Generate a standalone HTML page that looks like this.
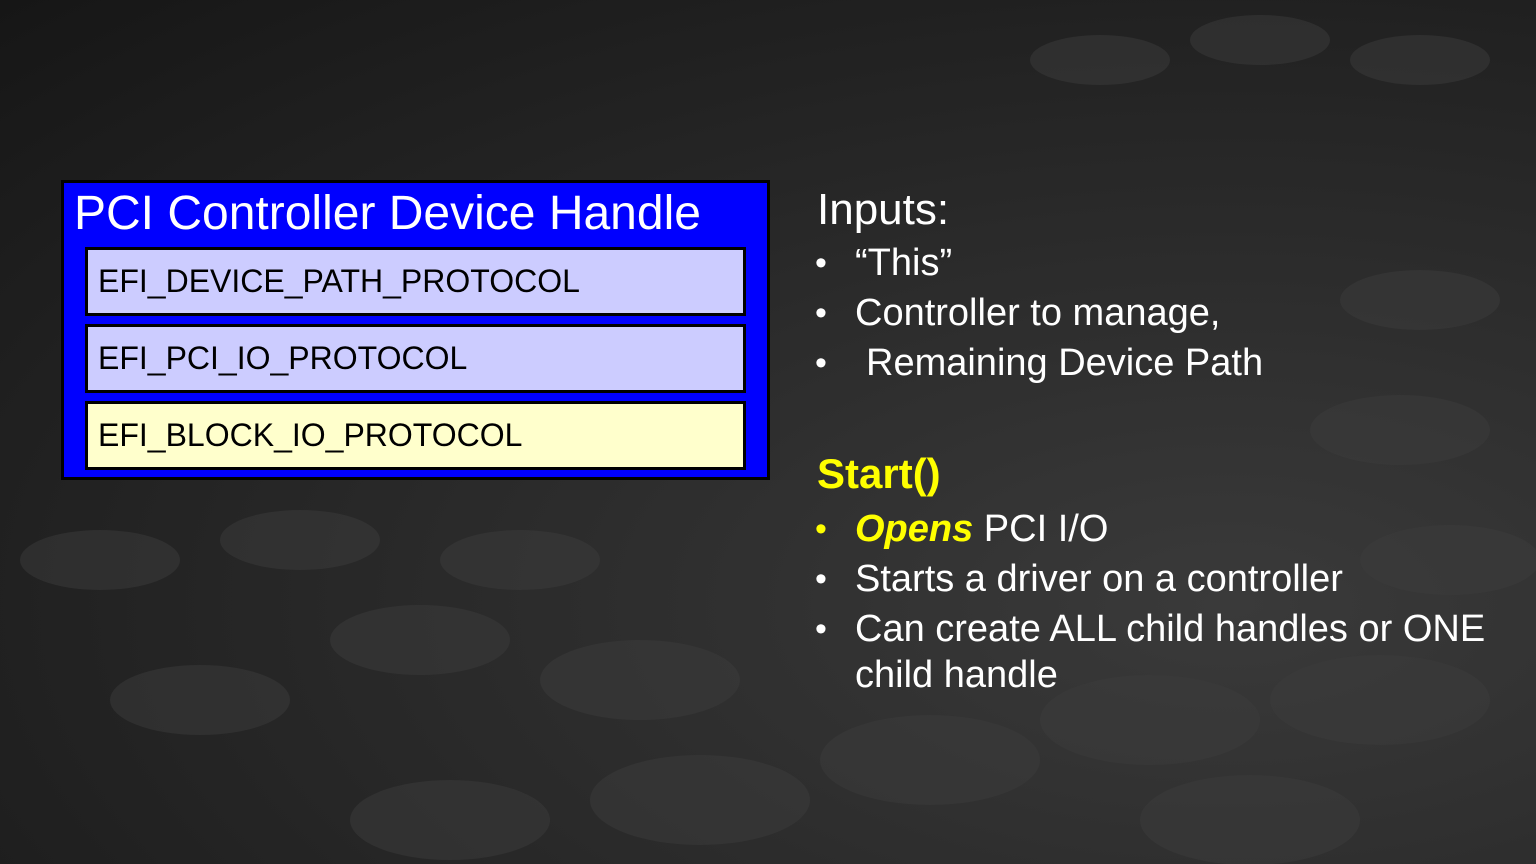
<!DOCTYPE html>
<html><head><meta charset="utf-8"><style>
body{margin:0;width:1536px;height:864px;overflow:hidden;font-family:"Liberation Sans",Arial,sans-serif;
background:radial-gradient(ellipse at 80% 70%,#3a3a3a 0%,#2a2a2a 45%,#161616 100%);position:relative}
.bg{position:absolute;inset:0}
.outer{position:absolute;left:61px;top:180px;width:703px;height:294px;background:#0000ff;border:3px solid #000}
.title{position:absolute;left:10px;top:3px;color:#fff;font-size:48px;white-space:nowrap}
.p{position:absolute;left:21px;width:645px;height:63px;border:3px solid #000;font-size:32px;line-height:63px;padding-left:10px;box-sizing:content-box;white-space:nowrap}
.t{position:absolute;color:#fff;font-size:38px;white-space:nowrap}
.b{position:absolute;left:815px;color:#fff;font-size:34px}
</style></head><body>
<svg class="bg" width="1536" height="864">
<g fill="#3c3c3c" opacity="0.5">
<ellipse cx="1100" cy="60" rx="70" ry="25"/><ellipse cx="1260" cy="40" rx="70" ry="25"/><ellipse cx="1420" cy="60" rx="70" ry="25"/>
<ellipse cx="1150" cy="720" rx="110" ry="45"/><ellipse cx="1380" cy="700" rx="110" ry="45"/><ellipse cx="930" cy="760" rx="110" ry="45"/>
<ellipse cx="700" cy="800" rx="110" ry="45"/><ellipse cx="450" cy="820" rx="100" ry="40"/><ellipse cx="1250" cy="820" rx="110" ry="45"/>
<ellipse cx="200" cy="700" rx="90" ry="35"/><ellipse cx="420" cy="640" rx="90" ry="35"/><ellipse cx="640" cy="680" rx="100" ry="40"/>
<ellipse cx="100" cy="560" rx="80" ry="30"/><ellipse cx="300" cy="540" rx="80" ry="30"/><ellipse cx="520" cy="560" rx="80" ry="30"/>
<ellipse cx="1450" cy="560" rx="90" ry="35"/><ellipse cx="1400" cy="430" rx="90" ry="35"/><ellipse cx="1420" cy="300" rx="80" ry="30"/>
</g></svg>
<div class="outer">
<div class="title">PCI Controller Device Handle</div>
<div class="p" style="top:64px;background:#ccccff">EFI_DEVICE_PATH_PROTOCOL</div>
<div class="p" style="top:141px;background:#ccccff">EFI_PCI_IO_PROTOCOL</div>
<div class="p" style="top:218px;background:#ffffcc">EFI_BLOCK_IO_PROTOCOL</div>
</div>
<div class="t" style="left:817px;top:185px;font-size:44px">Inputs:</div>
<div class="b" style="top:244px">•</div><div class="t" style="left:855px;top:242px">“This”</div>
<div class="b" style="top:294px">•</div><div class="t" style="left:855px;top:292px">Controller to manage,</div>
<div class="b" style="top:344px">•</div><div class="t" style="left:866px;top:342px">Remaining Device Path</div>
<div class="t" style="left:817px;top:450px;font-size:42px;font-weight:bold;color:#ffff00">Start()</div>
<div class="b" style="top:510px;color:#ffff00">•</div><div class="t" style="left:855px;top:508px"><b><i style="color:#ffff00">Opens</i></b> PCI I/O</div>
<div class="b" style="top:560px">•</div><div class="t" style="left:855px;top:558px">Starts a driver on a controller</div>
<div class="b" style="top:610px">•</div><div class="t" style="left:855px;top:608px">Can create ALL child handles or ONE</div>
<div class="t" style="left:855px;top:654px">child handle</div>
</body></html>
